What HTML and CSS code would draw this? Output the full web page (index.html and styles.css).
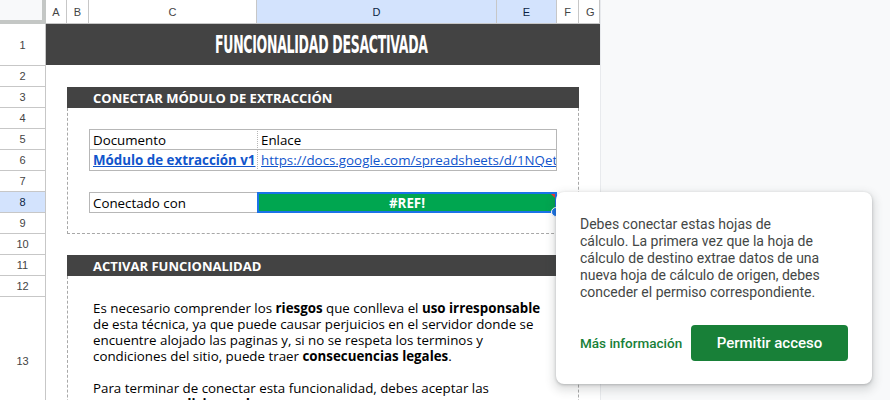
FILE: index.html
```html
<!DOCTYPE html>
<html lang="es">
<head>
<meta charset="utf-8">
<link rel="stylesheet" href="styles.css">
</head>
<body>
<div class="app">
  <div class="sheet">
    <div class="corner"></div>
    <div class="colh c-a">A</div>
    <div class="colh c-b">B</div>
    <div class="colh c-c">C</div>
    <div class="colh c-d sel">D</div>
    <div class="colh c-e sel">E</div>
    <div class="colh c-f">F</div>
    <div class="colh c-g">G</div>

    <div class="rowh r1">1</div>
    <div class="rowh r2">2</div>
    <div class="rowh r3">3</div>
    <div class="rowh r4">4</div>
    <div class="rowh r5">5</div>
    <div class="rowh r6">6</div>
    <div class="rowh r7">7</div>
    <div class="rowh r8 sel">8</div>
    <div class="rowh r9">9</div>
    <div class="rowh r10">10</div>
    <div class="rowh r11">11</div>
    <div class="rowh r12">12</div>
    <div class="rowh r13">13</div>

    <div class="title"><span class="title-text">FUNCIONALIDAD DESACTIVADA</span></div>

    <div class="section s1">CONECTAR MÓDULO DE EXTRACCIÓN</div>
    <div class="dash-box box1"></div>

    <div class="cell t-c5">Documento</div>
    <div class="cell t-d5">Enlace</div>
    <div class="cell t-c6"><a class="link bold">Módulo de extracción v1</a></div>
    <div class="cell t-d6"><a class="link">https://docs.google.com/spreadsheets/d/1NQet</a></div>

    <div class="cell t-c8">Conectado con</div>
    <div class="cell t-d8">#REF!<span class="err"></span><span class="handle"></span></div>

    <div class="section s2">ACTIVAR FUNCIONALIDAD</div>
    <div class="dash-box box2"></div>

    <div class="para">
      <p>Es necesario comprender los <b>riesgos</b> que conlleva el <b>uso irresponsable</b><br>de esta técnica, ya que puede causar perjuicios en el servidor donde se<br>encuentre alojado las paginas y, si no se respeta los terminos y<br>condiciones del sitio, puede traer <b>consecuencias legales</b>.</p>
      <p>Para terminar de conectar esta funcionalidad, debes aceptar las<br>siguientes <b>condiciones de uso</b>:</p>
    </div>
  </div>
  <div class="side"></div>

  <div class="popup">
    <p class="popup-text">Debes conectar estas hojas de<br>cálculo. La primera vez que la hoja de<br>cálculo de destino extrae datos de una<br>nueva hoja de cálculo de origen, debes<br>conceder el permiso correspondiente.</p>
    <div class="popup-actions">
      <a class="more">Más información</a>
      <button class="allow">Permitir acceso</button>
    </div>
  </div>
</div>
</body>
</html>
```
FILE: styles.css
```css
* { box-sizing: border-box; }
html, body { margin: 0; padding: 0; background: #fff; overflow: hidden; }
body { width: 890px; height: 400px; }

.app {
  position: relative;
  display: flex;
  width: 890px;
  height: 400px;
  overflow: hidden;
}

.sheet {
  flex: 0 0 600px;
  display: grid;
  grid-template-columns: 46px 21px 22px 168px 240px 60px 22px 21px;
  grid-template-rows: 24px 42px repeat(11, 21px) 140px;
  background: #fff;
  font-family: "Open Sans", sans-serif;
  font-size: 13.33px;
  color: #000;
}

.side {
  flex: 1;
  background: #f8f9fa;
  border-left: 1px solid #e8eaed;
}

/* headers */
.corner {
  grid-area: 1 / 1;
  background: #f8f9fa;
  border-right: 4px solid #c4c7c5;
  border-bottom: 4px solid #c4c7c5;
}
.colh {
  grid-row: 1;
  display: flex;
  align-items: center;
  justify-content: center;
  font-family: "Liberation Sans", Arial, sans-serif;
  font-size: 11px;
  color: #444;
  background: #fff;
  border-right: 1px solid #c7c7c7;
  border-bottom: 1px solid #c7c7c7;
  padding-top: 1px;
}
.c-a { grid-column: 2; }
.c-b { grid-column: 3; }
.c-c { grid-column: 4; }
.c-d { grid-column: 5; }
.c-e { grid-column: 6; }
.c-f { grid-column: 7; }
.c-g { grid-column: 8; justify-content: flex-start; padding-left: 7px; overflow: hidden; }
.colh.sel, .rowh.sel { background: #d3e3fd; color: #0b1f44; }

.rowh {
  grid-column: 1;
  display: flex;
  align-items: center;
  justify-content: center;
  font-family: "Liberation Sans", Arial, sans-serif;
  font-size: 11px;
  color: #444;
  background: #fff;
  border-right: 1px solid #c7c7c7;
  border-bottom: 1px solid #c7c7c7;
}
.r1 { grid-row: 2; }
.r2 { grid-row: 3; }
.r3 { grid-row: 4; }
.r4 { grid-row: 5; }
.r5 { grid-row: 6; }
.r6 { grid-row: 7; }
.r7 { grid-row: 8; }
.r8 { grid-row: 9; }
.r9 { grid-row: 10; }
.r10 { grid-row: 11; }
.r11 { grid-row: 12; }
.r12 { grid-row: 13; }
.r13 { grid-row: 14; align-items: flex-start; padding-top: 58px; border-bottom: none; }

/* title */
.title {
  grid-column: 2 / 9;
  grid-row: 2;
  background: #434343;
  display: flex;
  align-items: center;
  justify-content: center;
  overflow: hidden;
  border-bottom: 1px solid #fff;
}
.title-text {
  display: inline-block;
  font-family: "DejaVu Sans", sans-serif;
  font-stretch: condensed;
  font-weight: bold;
  font-size: 24px;
  color: #fff;
  letter-spacing: -0.5px;
  transform: scaleX(0.58);
  white-space: nowrap;
  margin-left: -4px;
}

/* sections */
.section {
  grid-column: 3 / 8;
  background: #434343;
  color: #fff;
  font-weight: bold;
  font-size: 13px;
  display: flex;
  align-items: center;
  padding-left: 26px;
  white-space: nowrap;
}
.s1 { grid-row: 4; }
.s2 { grid-row: 12; }

.dash-box {
  border-left: 1px dashed #a8a8a8;
  border-right: 1px dashed #a8a8a8;
}
.box1 { grid-column: 3 / 8; grid-row: 5 / 11; border-bottom: 1px dashed #a8a8a8; }
.box2 { grid-column: 3 / 8; grid-row: 13 / 15; }

/* cells */
.cell {
  display: flex;
  align-items: center;
  padding: 0 3px;
  white-space: nowrap;
  overflow: hidden;
}
.t-c5 { grid-column: 4; grid-row: 6; border: 1px solid #b7b7b7; border-right: none; }
.t-d5 { grid-column: 5 / 7; grid-row: 6; border: 1px solid #b7b7b7; border-left: 1px dotted #b7b7b7; }
.t-c6 { grid-column: 4; grid-row: 7; border-left: 1px solid #b7b7b7; border-bottom: 1px solid #b7b7b7; }
.t-d6 { grid-column: 5 / 7; grid-row: 7; border-right: 1px solid #b7b7b7; border-bottom: 1px solid #b7b7b7; border-left: 1px dotted #b7b7b7; }
.t-c8 { grid-column: 4; grid-row: 9; border: 1px solid #b7b7b7; border-right: none; }
.t-d8 {
  grid-column: 5 / 7;
  grid-row: 9;
  position: relative;
  overflow: visible;
  justify-content: center;
  background: #00a650;
  color: #fff;
  font-weight: bold;
  border: 2px solid #1a73e8;
}
.err {
  position: absolute;
  top: 0;
  right: 0;
  width: 0;
  height: 0;
  border-top: 4px solid #e53935;
  border-left: 4px solid transparent;
}
.handle {
  position: absolute;
  right: -6px;
  bottom: -6px;
  width: 10px;
  height: 10px;
  border-radius: 50%;
  background: #1a73e8;
  border: 1px solid #fff;
  z-index: 2;
}

.link { color: #1155cc; text-decoration: underline; }
.link.bold { font-weight: bold; }

.para {
  grid-column: 4 / 8;
  grid-row: 14;
  padding: 3px 4px 0;
  line-height: 16px;
  white-space: nowrap;
}
.para p { margin: 0 0 16px; }

/* popup */
.popup {
  position: absolute;
  left: 556px;
  top: 192px;
  width: 316px;
  height: 192px;
  background: #fff;
  border-radius: 8px;
  box-shadow: 0 1px 3px rgba(60,64,67,0.3), 0 4px 8px 3px rgba(60,64,67,0.15);
  padding: 24px 24px 23px;
  font-family: Roboto, "Noto Sans", sans-serif;
  display: flex;
  flex-direction: column;
  z-index: 5;
}
.popup-text {
  margin: 0;
  font-size: 14px;
  line-height: 17px;
  color: #444746;
  white-space: nowrap;
}
.popup-actions {
  margin-top: auto;
  display: flex;
  align-items: center;
  justify-content: space-between;
}
.more {
  color: #188038;
  font-size: 13.5px;
  font-weight: 500;
}
.allow {
  width: 157px;
  height: 36px;
  border: none;
  border-radius: 4px;
  background: #188038;
  color: #fff;
  font-family: Roboto, "Noto Sans", sans-serif;
  font-size: 15px;
  font-weight: 500;
}
```
